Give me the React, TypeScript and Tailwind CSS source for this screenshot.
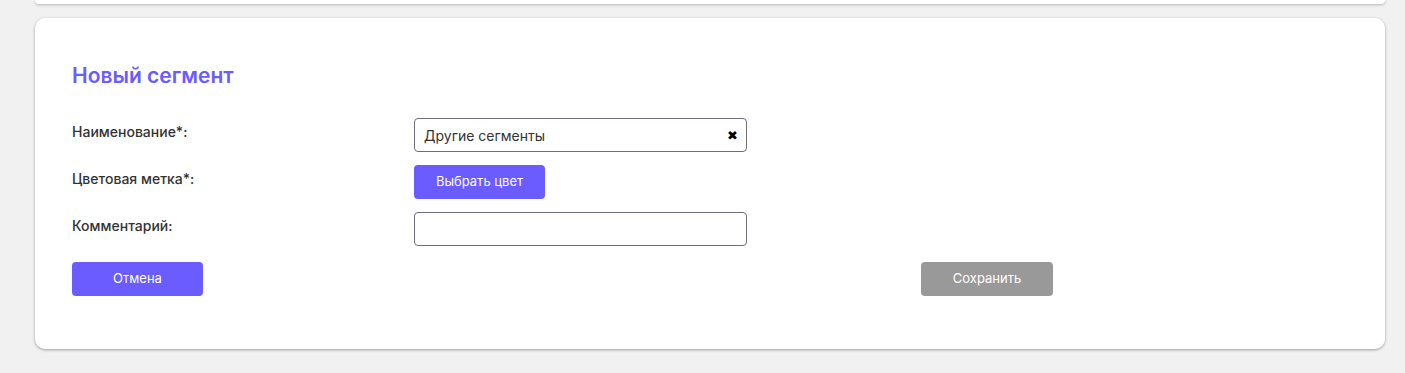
import React, { useState } from 'react';

export default function App() {
  const [name, setName] = useState('Другие сегменты');
  const [comment, setComment] = useState('');

  return (
    <div className="min-h-[373px] bg-[#f1f1f1] pl-[35px] pr-[20px] font-['Inter',sans-serif] text-[#333]">
      {/* bottom of previous card */}
      <div className="h-[4px] rounded-b-[10px] bg-white shadow-[0_1px_3px_rgba(0,0,0,0.25)]" />

      <div className="mt-[14px] rounded-[10px] bg-white px-[37px] pt-[46px] pb-[53px] shadow-[0_1px_3px_rgba(0,0,0,0.35)]">
        <h2 className="text-[21px] leading-[24px] font-semibold text-[#6a5cff]">Новый сегмент</h2>

        <div className="mt-[30px] flex flex-col gap-[13px]">
          <div className="flex items-start">
            <label className="w-[342px] pt-[4px] text-[14px] leading-[20px] font-medium">Наименование*:</label>
            <div className="relative w-[333px]">
              <input
                value={name}
                onChange={(e) => setName(e.target.value)}
                className="h-[34px] w-full rounded-[4px] border border-[#6e6e7a] pl-[9px] pr-[30px] text-[14px] text-[#333] caret-[#3b3bd0] outline-none"
              />
              <button
                onClick={() => setName('')}
                className="absolute right-[9px] top-1/2 -translate-y-1/2 text-[13px] leading-none text-black"
              >
                ✖
              </button>
            </div>
          </div>

          <div className="flex items-start">
            <label className="w-[342px] pt-[4px] text-[14px] leading-[20px] font-medium">Цветовая метка*:</label>
            <button className="h-[34px] w-[131px] rounded-[4px] bg-[#6a5cff] text-[13px] text-white">
              Выбрать цвет
            </button>
          </div>

          <div className="flex items-start">
            <label className="w-[342px] pt-[4px] text-[14px] leading-[20px] font-medium">Комментарий:</label>
            <input
              value={comment}
              onChange={(e) => setComment(e.target.value)}
              className="h-[34px] w-[333px] rounded-[4px] border border-[#6e6e7a] px-[9px] text-[14px] outline-none"
            />
          </div>
        </div>

        <div className="mt-[16px] flex w-[981px] justify-between">
          <button className="h-[34px] w-[131px] rounded-[4px] bg-[#6a5cff] text-[13px] text-white">Отмена</button>
          <button className="h-[34px] w-[132px] rounded-[4px] bg-[#999] text-[13px] text-white">Сохранить</button>
        </div>
      </div>
    </div>
  );
}
